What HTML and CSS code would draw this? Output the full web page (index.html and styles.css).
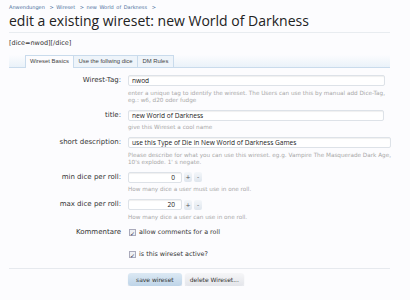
FILE: index.html
```html
<!DOCTYPE html>
<html>
<head>
<meta charset="utf-8">
<link rel="stylesheet" href="styles.css">
</head>
<body>
<div class="page">
  <div class="crumbs"><a>Anwendungen</a> &gt; <a>Wireset</a> &gt; <a>new World of Darkness</a> &gt;</div>
  <h1 class="title">edit a existing wireset: new World of Darkness</h1>
  <div class="code">[dice=nwod][/dice]</div>
  <div class="tabs">
    <span class="tab active">Wireset Basics</span>
    <span class="tab">Use the follwing dice</span>
    <span class="tab">DM Rules</span>
  </div>
  <div class="form">
    <div class="row">
      <div class="label">Wirest-Tag:</div>
      <div class="field">
        <div class="input">nwod</div>
        <div class="hint">enter a unique tag to identify the wireset. The Users can use this by manual add Dice-Tag,<br>eg.: w6, d20 oder fudge</div>
      </div>
    </div>
    <div class="row">
      <div class="label">title:</div>
      <div class="field">
        <div class="input">new World of Darkness</div>
        <div class="hint">give this Wireset a cool name</div>
      </div>
    </div>
    <div class="row">
      <div class="label">short description:</div>
      <div class="field">
        <div class="input">use this Type of Die in New World of Darkness Games</div>
        <div class="hint">Please describe for what you can use this wireset. eg.g. Vampire The Masquerade Dark Age,<br>10's explode. 1' s negate.</div>
      </div>
    </div>
    <div class="row">
      <div class="label">min dice per roll:</div>
      <div class="field">
        <div class="spin"><div class="input num">0</div><span class="sbtn">+</span><span class="sbtn">-</span></div>
        <div class="hint">How many dice a user must use in one roll.</div>
      </div>
    </div>
    <div class="row">
      <div class="label">max dice per roll:</div>
      <div class="field">
        <div class="spin"><div class="input num">20</div><span class="sbtn">+</span><span class="sbtn">-</span></div>
        <div class="hint">How many dice a user can use in one roll.</div>
      </div>
    </div>
    <div class="row check-row">
      <div class="label">Kommentare</div>
      <div class="field">
        <label class="check"><span class="box">&#10003;</span>allow comments for a roll</label>
      </div>
    </div>
    <div class="row check-row second">
      <div class="label"></div>
      <div class="field">
        <label class="check"><span class="box">&#10003;</span>is this wireset active?</label>
      </div>
    </div>
  </div>
  <div class="actions">
    <span class="button primary">save wireset</span>
    <span class="button">delete Wireset...</span>
  </div>
</div>
</body>
</html>
```
FILE: styles.css
```css
html, body {
  margin: 0;
  padding: 0;
  background: #fcfcfe;
}
.page {
  padding: 2px 20px 0 9px;
  font-family: "DejaVu Sans", sans-serif;
  color: #333;
}
.crumbs {
  font-size: 5px;
  color: #4a6f9c;
  height: 8px;
  line-height: 8px;
  padding-top: 1px;
  word-spacing: 1px;
}
.crumbs a { margin-right: 2px; }
.title {
  font-family: "Open Sans", sans-serif;
  font-weight: normal;
  font-size: 14px;
  color: #222;
  margin: 1px 0 0;
  line-height: 18px;
  padding-bottom: 2px;
  border-bottom: 1px solid #e8ecf0;
}
.code {
  font-size: 6.5px;
  color: #333;
  margin-top: 6px;
  line-height: 8px;
}
.tabs {
  margin-top: 8px;
  height: 12px;
  padding-left: 16px;
  display: flex;
  align-items: flex-end;
  background: linear-gradient(to bottom, #fcfcfe 0%, #eaf2f9 100%);
  border-bottom: 1px solid #c9dbec;
}
.tab {
  font-family: "Liberation Sans", sans-serif;
  font-size: 5.9px;
  line-height: 11px;
  height: 11px;
  padding: 0 4.5px;
  color: #444;
  border: 1px solid #c9dbec;
  border-bottom: none;
  background: #eef4fa;
  margin-right: -1px;
}
.tab.active {
  background: #fcfcfe;
  margin-bottom: -1px;
  height: 12px;
  padding: 0 4px;
}
.form { margin-top: 7px; }
.row {
  display: flex;
  gap: 7px;
  margin-bottom: 6px;
}
.label {
  width: 112px;
  flex: none;
  text-align: right;
  font-size: 7px;
  line-height: 11px;
  color: #333;
}
.field { flex: 1; padding-right: 6px; }
.input {
  height: 9px;
  border: 1px solid #dde2e8;
  border-radius: 2px;
  background: #fff;
  font-family: "Open Sans", sans-serif;
  font-size: 6.6px;
  line-height: 9px;
  padding: 0 3px;
  color: #222;
  box-shadow: inset 0 1px 1px #f0f0f0;
}
.hint {
  font-size: 5.7px;
  line-height: 7px;
  color: #a8a8a8;
  margin-top: 3.5px;
  white-space: nowrap;
}
.spin { display: flex; align-items: center; }
.input.num { width: 43px; text-align: right; padding-right: 6px; }
.sbtn {
  width: 8px;
  height: 10px;
  font-size: 6px;
  line-height: 10px;
  text-align: center;
  border-radius: 2px;
  background: linear-gradient(#f4f7fa, #dfe6ee);
  color: #555;
  margin-left: 2px;
}
.check-row { margin-top: 2px; margin-bottom: 11px; }
.check-row.second { margin-top: 0; margin-bottom: 8px; }
.check {
  display: flex;
  align-items: center;
  gap: 3px;
  font-size: 6.4px;
  line-height: 11px;
  color: #333;
  padding-left: 1px;
}
.box {
  width: 7px;
  height: 7px;
  border: 1px solid #aab;
  background: #eef0f4;
  font-size: 6px;
  line-height: 7px;
  text-align: center;
  color: #335;
  box-sizing: border-box;
  display: inline-block;
}
.actions {
  border-top: 1px solid #e6e9ee;
  padding: 4px 0 0 119px;
  display: flex;
  gap: 3px;
}
.button {
  font-size: 6px;
  line-height: 13px;
  height: 13px;
  padding: 0 5px;
  border-radius: 3px;
  background: linear-gradient(#f6f6f8, #e3e5ea);
  color: #333;
  box-shadow: 0 1px 1px #d8dbe0;
}
.button.primary {
  background: linear-gradient(#dce9f4, #bed4e8);
  padding: 0 8px;
}
```
